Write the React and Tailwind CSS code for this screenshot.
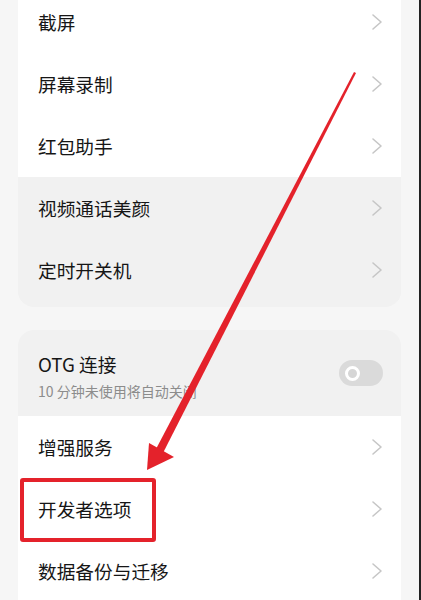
import React from 'react'

const font = { fontFamily: '"Noto Sans CJK SC", "Noto Sans", sans-serif' }

function Chevron() {
  return (
    <svg width="12" height="18" viewBox="0 0 12 18" className="shrink-0">
      <polyline points="2,2 10,9 2,16" fill="none" stroke="#c6c6c6" strokeWidth="1.6" strokeLinecap="round" strokeLinejoin="round" />
    </svg>
  )
}

function Row({ label, gray }) {
  return (
    <div className={`h-[62px] flex items-center justify-between pl-5 pr-[18px] ${gray ? 'bg-[#f1f1f1]' : 'bg-white'}`}>
      <span className="text-[18.7px] text-[#161616] leading-none">{label}</span>
      <Chevron />
    </div>
  )
}

function Toggle() {
  return (
    <div className="w-[44px] h-[26px] rounded-full bg-[#dadada] flex items-center pl-[6px]">
      <div className="w-[15px] h-[15px] rounded-full border-[3px] border-white bg-[#d6d6d6]" />
    </div>
  )
}

export default function App() {
  return (
    <div className="relative w-[421px] h-[600px] overflow-hidden bg-[#f6f6f6] border-r-2 border-[#222]" style={font}>
      <div className="pl-[18px] pr-[18px]">
        {/* first group, scrolled past its top */}
        <div className="-mt-[9px] rounded-b-2xl overflow-hidden bg-[#f1f1f1] pb-[6px]">
          <Row label="截屏" />
          <Row label="屏幕录制" />
          <Row label="红包助手" />
          <Row label="视频通话美颜" gray />
          <Row label="定时开关机" gray />
        </div>

        {/* second group */}
        <div className="mt-[23px] rounded-t-2xl overflow-hidden">
          <div className="h-[86px] bg-[#f1f1f1] flex items-center justify-between pl-5 pr-[18px]">
            <div className="flex flex-col pt-[7px]">
              <span className="text-[18.7px] text-[#161616] leading-none">OTG 连接</span>
              <span className="mt-[11px] text-[14px] text-[#8c8c8c] leading-none">10 分钟未使用将自动关闭</span>
            </div>
            <Toggle />
          </div>
          <Row label="增强服务" />
          <Row label="开发者选项" />
          <Row label="数据备份与迁移" />
        </div>
      </div>

      {/* annotation: highlight box */}
      <div className="absolute left-[20px] top-[478px] w-[136px] h-[64px] border-[4px] border-[#e4222b] rounded-[3px]" />

      {/* annotation: arrow */}
      <svg className="absolute left-0 top-0" width="421" height="600" viewBox="0 0 421 600">
        <polygon points="354,72 356,73 163,453 156,449" fill="#e4222b" />
        <polygon points="147,470 149,443 174,457" fill="#e4222b" />
      </svg>
    </div>
  )
}
